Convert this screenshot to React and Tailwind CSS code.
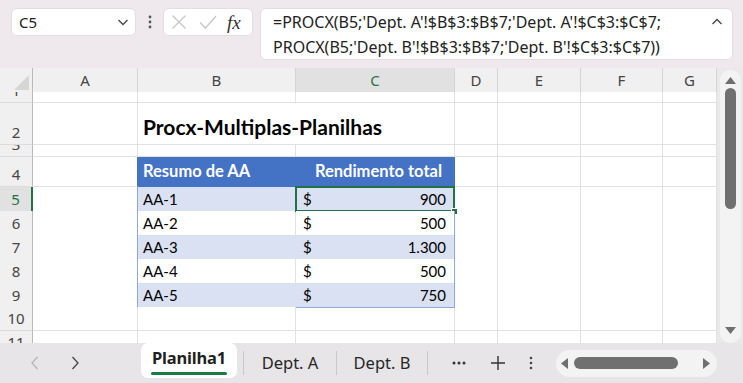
import React from 'react'

const ui = { fontFamily: "'Noto Sans', 'Open Sans', sans-serif" }
const cell = { fontFamily: "Lato, 'Liberation Sans', sans-serif" }

const cols = 'grid grid-cols-[33px_105px_158px_159px_43px_83px_82px_54px]'

const data = [
  { name: 'AA-1', value: '900', band: true },
  { name: 'AA-2', value: '500', band: false },
  { name: 'AA-3', value: '1.300', band: true },
  { name: 'AA-4', value: '500', band: false },
  { name: 'AA-5', value: '750', band: true },
]

const RowHead = ({ n, active }) => (
  <div
    className={
      'flex items-end justify-center overflow-hidden border-b border-[#dcdcdc] text-[15px] leading-none pb-[4px] ' +
      (active
        ? 'bg-[#e1e1e1] text-[#217346] border-r-2 border-r-[#217346]'
        : 'bg-[#f0f0f0] text-[#444] border-r border-r-[#b9b9b9]')
    }
    style={ui}
  >
    {n}
  </div>
)

const Blank = ({ className = '' }) => (
  <div className={'bg-white border-r border-b border-[#e1e1e1] ' + className} />
)

const EmptyRow = ({ n, h }) => (
  <div className={cols + ' ' + h}>
    <RowHead n={n} />
    {[0, 1, 2, 3, 4, 5, 6].map((i) => (
      <Blank key={i} />
    ))}
  </div>
)

const ColHeaders = () => {
  const letters = ['A', 'B', 'C', 'D', 'E', 'F', 'G']
  return (
    <div className={cols + ' h-[24px]'} style={ui}>
      <div className="bg-[#f0f0f0] border-r border-r-[#b9b9b9] border-b border-b-[#b9b9b9] flex items-end justify-end pr-[3px] pb-[3px]">
        <svg width="15" height="15" viewBox="0 0 15 15">
          <polygon points="15,0 15,15 0,15" fill="#d6d6d6" />
        </svg>
      </div>
      {letters.map((l) =>
        l === 'C' ? (
          <div key={l} className="bg-[#e1e1e1] border-r border-r-[#d4d4d4] border-b-2 border-b-[#217346] flex items-center justify-center text-[15px] text-[#217346] pt-[1px]">
            {l}
          </div>
        ) : (
          <div key={l} className="bg-[#f0f0f0] border-r border-r-[#d4d4d4] border-b border-b-[#b9b9b9] flex items-center justify-center text-[15px] text-[#444]">
            {l}
          </div>
        )
      )}
    </div>
  )
}

const Grid = () => (
  <div className="w-[717px] overflow-hidden bg-white">
    <ColHeaders />
    <EmptyRow n={1} h="h-[11px]" />
    <div className={cols + ' h-[42px]'}>
      <RowHead n={2} />
      <Blank />
      <div className="col-span-2 bg-white border-r border-b border-[#e1e1e1] flex items-end pl-[5px] pb-[7px] whitespace-nowrap">
        <span className="text-[21px] font-bold text-black leading-none" style={cell}>
          Procx-Multiplas-Planilhas
        </span>
      </div>
      <Blank />
      <Blank />
      <Blank />
      <Blank />
    </div>
    <EmptyRow n={3} h="h-[12px]" />
    <div className={cols + ' h-[30px]'} style={cell}>
      <RowHead n={4} />
      <Blank className="border-r-[#4472c4]" />
      <div className="bg-[#4472c4] flex items-end pl-[5px] pb-[3px] text-[16.5px] font-bold text-white">Resumo de AA</div>
      <div className="bg-[#4472c4] flex items-end justify-end pr-[12px] pb-[3px] text-[16.5px] font-bold text-white border-r border-r-[#4472c4]">
        Rendimento total
      </div>
      <Blank />
      <Blank />
      <Blank />
      <Blank />
    </div>
    {data.map((r, i) => (
      <div key={r.name} className={cols + ' h-[24px]'} style={cell}>
        <RowHead n={i + 5} active={i === 0} />
        <Blank className="border-r-[#8ea9db]" />
        <div
          className={
            'flex items-center pl-[5px] pt-[1px] text-[15px] text-black border-b border-b-[#8ea9db] border-r ' +
            (r.band ? 'bg-[#d9e1f2] border-r-[#d9e1f2]' : 'bg-white border-r-[#e1e1e1]')
          }
        >
          {r.name}
        </div>
        <div
          className={
            'relative flex items-center justify-between pl-[7px] pr-[8px] pt-[1px] text-[15px] text-black border-b border-b-[#8ea9db] border-r border-r-[#8ea9db] ' +
            (r.band ? 'bg-[#d9e1f2]' : 'bg-white')
          }
        >
          <span>$</span>
          <span>{r.value}</span>
          {i === 0 && (
            <>
              <div className="absolute -top-[1px] -left-[1px] -right-[1px] -bottom-[1px] border-2 border-[#217346]" />
              <div className="absolute -bottom-[4px] -right-[4px] w-[7px] h-[7px] bg-[#217346] border border-white" />
            </>
          )}
        </div>
        <Blank />
        <Blank />
        <Blank />
        <Blank />
      </div>
    ))}
    <EmptyRow n={10} h="h-[24px]" />
    <EmptyRow n={11} h="h-[24px]" />
  </div>
)

const VScroll = () => (
  <div className="w-[26px] bg-[#e9e9e9] pl-[3px] pr-[2px] pt-[2px]">
    <div className="h-[273px] bg-[#f3f3f3] rounded-[10px] flex flex-col items-center pt-[7px]">
      <svg width="11" height="7" viewBox="0 0 11 7">
        <polygon points="5.5,0 11,7 0,7" fill="#6f6f6f" />
      </svg>
      <div className="mt-[4px] w-[11px] h-[121px] rounded-full bg-[#707070]" />
      <div className="flex-1" />
      <svg width="11" height="7" viewBox="0 0 11 7" className="mb-[9px]">
        <polygon points="0,0 11,0 5.5,7" fill="#6f6f6f" />
      </svg>
    </div>
  </div>
)

const TopBar = () => (
  <div className="h-[68px] flex items-start pt-[8px] pl-[11px]" style={ui}>
    <div className="w-[125px] h-[28px] bg-white rounded-[6px] border border-[#e2dde1] flex items-center justify-between pl-[7px] pr-[5px]">
      <span className="text-[15px] text-[#222]">C5</span>
      <svg width="14" height="14" viewBox="0 0 14 14" fill="none" stroke="#444" strokeWidth="1.3">
        <path d="M2.5 5 L7 9.5 L11.5 5" />
      </svg>
    </div>
    <div className="w-[27px] h-[28px] flex items-center justify-center">
      <svg width="4" height="14" viewBox="0 0 4 14" fill="#555">
        <circle cx="2" cy="2" r="1.4" />
        <circle cx="2" cy="7" r="1.4" />
        <circle cx="2" cy="12" r="1.4" />
      </svg>
    </div>
    <div className="w-[90px] h-[28px] bg-white rounded-[6px] border border-[#e2dde1] flex items-center pl-[7px]">
      <svg width="16" height="16" viewBox="0 0 16 16" fill="none" stroke="#c4c4c4" strokeWidth="1.2">
        <path d="M1.5 1.5 L14.5 14.5 M14.5 1.5 L1.5 14.5" />
      </svg>
      <svg width="18" height="16" viewBox="0 0 18 16" fill="none" stroke="#c4c4c4" strokeWidth="1.2" className="ml-[12px]">
        <path d="M1 8.5 L6.5 14 L17 2" />
      </svg>
      <span className="ml-[10px] text-[19px] italic text-[#333] leading-none" style={{ fontFamily: "'Liberation Serif', 'DejaVu Serif', serif" }}>
        fx
      </span>
    </div>
    <div className="ml-[7px] w-[473px] h-[52px] bg-white rounded-[6px] border border-[#e2dde1] flex justify-between pl-[12px] pr-[8px] pt-[1px]">
      <div className="text-[16px] leading-[25px] text-[#222] whitespace-nowrap">
        <div>=PROCX(B5;'Dept. A'!$B$3:$B$7;'Dept. A'!$C$3:$C$7;</div>
        <div>PROCX(B5;'Dept. B'!$B$3:$B$7;'Dept. B'!$C$3:$C$7))</div>
      </div>
      <svg width="14" height="14" viewBox="0 0 14 14" fill="none" stroke="#444" strokeWidth="1.3" className="mt-[5px]">
        <path d="M2.5 9 L7 4.5 L11.5 9" />
      </svg>
    </div>
  </div>
)

const TabBar = () => (
  <div className="h-[40px] bg-[#e7e5e8] flex items-start" style={ui}>
    <div className="w-[141px] h-[40px] flex items-center pl-[28px]">
      <svg width="14" height="16" viewBox="0 0 14 16" fill="none" stroke="#b5b5b5" strokeWidth="1.3">
        <path d="M9.5 2 L4 8 L9.5 14" />
      </svg>
      <svg width="14" height="16" viewBox="0 0 14 16" fill="none" stroke="#444" strokeWidth="1.3" className="ml-[26px]">
        <path d="M4.5 2 L10 8 L4.5 14" />
      </svg>
    </div>
    <div className="w-[96px] h-[35px] bg-white rounded-[7px] flex flex-col items-center pt-[3px]">
      <span className="text-[16.5px] font-bold text-[#1f1f1f] tracking-[-0.2px]">Planilha1</span>
      <div className="mt-[1px] w-[76px] h-[3px] bg-[#1b7c43] rounded-full" />
    </div>
    <div className="h-[40px] flex items-center">
      <div className="ml-[6px] w-px h-[24px] bg-[#c9c7ca]" />
      <span className="w-[92px] text-center text-[16.5px] text-[#262626]">Dept. A</span>
      <div className="w-px h-[24px] bg-[#c9c7ca]" />
      <span className="w-[90px] text-center text-[16.5px] text-[#262626]">Dept. B</span>
      <div className="w-px h-[24px] bg-[#c9c7ca]" />
      <div className="w-[62px] flex justify-center">
        <svg width="14" height="4" viewBox="0 0 14 4" fill="#333">
          <circle cx="2" cy="2" r="1.5" />
          <circle cx="7" cy="2" r="1.5" />
          <circle cx="12" cy="2" r="1.5" />
        </svg>
      </div>
      <svg width="16" height="16" viewBox="0 0 16 16" fill="none" stroke="#333" strokeWidth="1.4">
        <path d="M8 1 V15 M1 8 H15" />
      </svg>
      <div className="w-[50px] flex justify-center">
        <svg width="4" height="14" viewBox="0 0 4 14" fill="#444">
          <circle cx="2" cy="2" r="1.3" />
          <circle cx="2" cy="7" r="1.3" />
          <circle cx="2" cy="12" r="1.3" />
        </svg>
      </div>
      <div className="w-[161px] h-[27px] bg-[#f3f3f3] rounded-full flex items-center pl-[5px] pr-[7px]">
        <svg width="7" height="11" viewBox="0 0 7 11">
          <polygon points="7,0 7,11 0,5.5" fill="#6f6f6f" />
        </svg>
        <div className="ml-[6px] w-[104px] h-[12px] rounded-full bg-[#707070]" />
        <div className="flex-1" />
        <svg width="7" height="11" viewBox="0 0 7 11">
          <polygon points="0,0 0,11 7,5.5" fill="#6f6f6f" />
        </svg>
      </div>
    </div>
  </div>
)

export default function App() {
  return (
    <div className="w-[743px] h-[383px] overflow-hidden flex flex-col bg-[#efe9ed]">
      <TopBar />
      <div className="h-[275px] flex overflow-hidden">
        <Grid />
        <VScroll />
      </div>
      <TabBar />
    </div>
  )
}
